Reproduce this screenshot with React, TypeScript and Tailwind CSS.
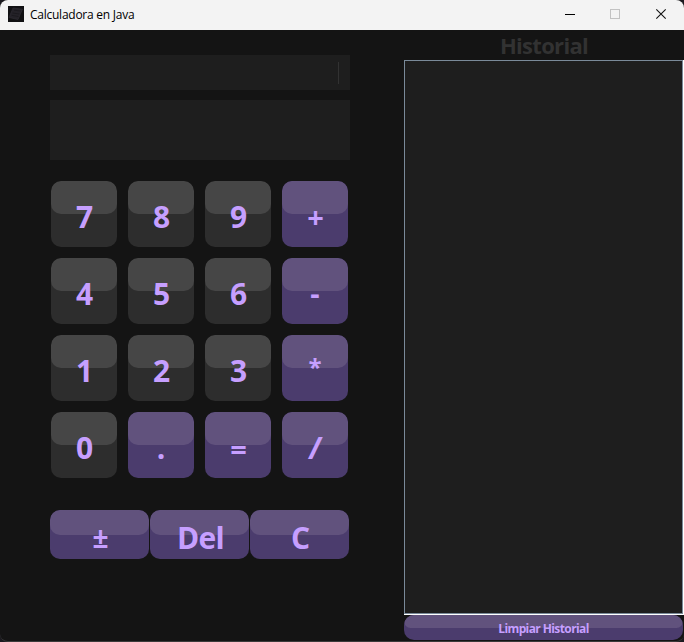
const keys = ["7", "8", "9", "+", "4", "5", "6", "-", "1", "2", "3", "*", "0", ".", "=", "/"];

const glyphStyles: Record<string, string> = {
  "+": "top-[3px] left-[0.5px] text-[29px] leading-[40px]",
  "-": "top-[2px] text-[29px] leading-[40px]",
  "*": "top-[-1px] text-[24px] leading-[40px]",
  ".": "top-[3px] text-[30px] leading-[40px]",
  "=": "top-[4px] left-[0.5px] text-[29px] leading-[40px]",
  "/": "top-[2px] text-[31px] leading-[40px] -skew-x-[6deg]",
  "±": "top-[2px] left-[1px] text-[28px] leading-[40px]",
  Del: "top-[3px] left-[1px] text-[30px] leading-[40px] tracking-[-0.7px]",
  C: "top-[3px] left-[1px] text-[30px] leading-[40px]",
  "Limpiar Historial": "top-[1px] text-[12px] leading-4 tracking-[-0.6px]",
};

function Key({ label, className, gloss }: { label: string; className: string; gloss: string }) {
  const digit = /^\d$/.test(label);
  return (
    <button
      className={`relative flex items-center justify-center overflow-hidden rounded-[10px] font-bold text-[#c69fff] ${digit ? "bg-[#2d2d2d]" : "bg-[#4b3c6d]"} ${className}`}
    >
      <span className={`absolute inset-x-0 top-0 rounded-[10px] ${digit ? "bg-[#464646]" : "bg-[#61527d]"} ${gloss}`} />
      <span className={`relative ${glyphStyles[label] ?? "top-[3px] left-[0.5px] text-[30px] leading-[40px]"}`}>{label}</span>
    </button>
  );
}

function TitleBar() {
  return (
    <header className="flex h-[30px] items-center bg-[#f3f3f3] pl-2 text-black">
      <svg width="16" height="16" viewBox="0 0 16 16" className="-mt-0.5">
        <rect width="16" height="16" fill="#111113" />
        <path d="M5 2L14.5 3.2L10 13.5L1 11.5Z" fill="#242228" stroke="#302d35" strokeWidth=".6" />
        <path d="M6 4.2L12.5 5M4.5 7L11.5 8M3.5 9.3L10.5 10.5" stroke="#17161a" strokeWidth=".7" />
      </svg>
      <span className="ml-1.5 text-[12px] leading-[30px] tracking-[-0.25px]">Calculadora en Java</span>
      <svg className="ml-auto" width="120" height="30" viewBox="0 0 120 30" fill="none">
        <path d="M1 14.5H11" stroke="#000" />
        <rect x="46.5" y="9.5" width="9" height="9" stroke="#c2c2c2" />
        <path d="M92.3 9.3L101.7 18.7M101.7 9.3L92.3 18.7" stroke="#111" strokeWidth="1.1" />
      </svg>
    </header>
  );
}

export default function App() {
  return (
    <div className="h-[642px] w-[684px] bg-[#1b1a1f]">
      <div className="flex h-[642px] w-[684px] flex-col overflow-hidden rounded-[8px] border-b border-[#3b3b3b] bg-[#141414] font-['Open_Sans','Noto_Sans',sans-serif]">
        <TitleBar />
        <main className="flex min-h-0 flex-1">
          <section className="w-[404px] pl-[50px] pt-[25px]">
            <div className="flex h-[35px] w-[300px] items-center justify-end bg-[#1e1e1e] pr-[11px]">
              <div className="h-[22px] w-px bg-[#323232]" />
            </div>
            <div className="mt-2.5 h-[60px] w-[300px] bg-[#1e1e1e]" />
            <div className="ml-px mt-[21px] grid w-[297px] grid-cols-4 gap-[11px]">
              {keys.map((key) => (
                <Key key={key} label={key} className="size-[66px]" gloss="h-[33px]" />
              ))}
            </div>
            <div className="mt-8 flex gap-px">
              {["±", "Del", "C"].map((key) => (
                <Key key={key} label={key} className="h-[49px] w-[99px]" gloss="h-[25px]" />
              ))}
            </div>
          </section>
          <aside className="flex w-[280px] flex-col">
            <h2 className="h-[30px] text-center text-[22px] font-bold leading-[31px] tracking-[-0.7px] text-[#323232]">Historial</h2>
            <div className="h-[555px] border-b border-r border-white">
              <div className="h-full border border-[#7a8a99] bg-[#1e1e1e]" />
            </div>
            <Key label="Limpiar Historial" className="h-[25px] w-[279px]" gloss="h-[13px]" />
          </aside>
        </main>
      </div>
    </div>
  );
}
